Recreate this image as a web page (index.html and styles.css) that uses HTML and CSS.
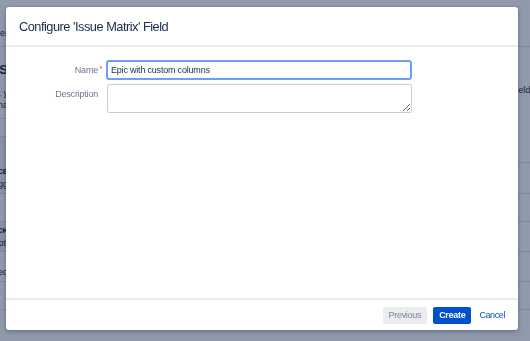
FILE: index.html
```html
<!DOCTYPE html>
<html lang="en">
<head>
  <meta charset="UTF-8" />
  <title>Configure 'Issue Matrix' Field</title>
  <link rel="stylesheet" href="styles.css">
</head>
<body>

  <!-- page behind the dialog -->
  <div class="page">
    <div class="page-head">
      <div class="side-left"><span class="frag">Field manager</span></div>
    </div>
    <div class="page-main">
      <div class="side-left">
        <div class="bg-row row-intro">
          <div class="frag frag-title">FIELDS</div>
          <div class="frag">Add a field; y</div>
          <div class="frag">Issue na</div>
        </div>
        <div class="bg-row row-empty"></div>
        <div class="bg-row row-item">
          <div class="frag frag-bold">PLACE</div>
          <div class="frag">Tagg</div>
        </div>
        <div class="bg-row row-gap"></div>
        <div class="bg-row row-item2">
          <div class="frag frag-bold">CHECK</div>
          <div class="frag">Opti</div>
        </div>
        <div class="bg-row row-last">
          <div class="frag">Created</div>
        </div>
        <div class="bg-row row-gap"></div>
      </div>

      <div class="side-right">
        <div class="bg-row row-right-top">
          <div class="frag-r">Field</div>
        </div>
        <div class="bg-row row-right-a"></div>
        <div class="bg-row row-gap"></div>
        <div class="bg-row row-right-b"></div>
        <div class="bg-row row-right-b"></div>
        <div class="bg-row row-gap"></div>
      </div>
    </div>
  </div>

  <div class="blanket"></div>

  <!-- the dialog -->
  <div class="dialog">
    <div class="dialog-header">
      <h2 class="dialog-title">Configure 'Issue Matrix' Field</h2>
    </div>

    <div class="dialog-body">
      <form class="form">
        <label class="form-label" for="fieldName">Name<span class="req">*</span></label>
        <input class="text-input" id="fieldName" type="text" value="Epic with custom columns" />

        <label class="form-label" for="fieldDesc">Description</label>
        <textarea class="text-area" id="fieldDesc"></textarea>
      </form>
    </div>

    <div class="dialog-footer">
      <button class="btn btn-prev">Previous</button>
      <button class="btn btn-create">Create</button>
      <a class="btn-link" href="#">Cancel</a>
    </div>
  </div>

</body>
</html>
```

FILE: styles.css
```css
* {
  box-sizing: border-box;
}

html,
body {
  margin: 0;
  padding: 0;
  height: 100%;
}

body {
  font-family: "Liberation Sans", Arial, sans-serif;
  background-color: #fff;
  color: #172b4d;
  overflow: hidden;
}

/* background page */

.page {
  height: 341px;
  display: flex;
  flex-direction: column;
  font-size: 9px;
}

.page-head {
  height: 47px;
  border-bottom: 1px solid #dfe1e6;
  display: flex;
  align-items: flex-end;
  padding-bottom: 7px;
}

.page-main {
  flex: 1;
  display: flex;
  justify-content: space-between;
}

.side-left {
  width: 8px;
  display: flex;
  flex-direction: column;
}

.page-head .side-left {
  align-items: flex-end;
}

.side-right {
  width: 22px;
  display: flex;
  flex-direction: column;
}

.frag {
  display: flex;
  justify-content: flex-end;
  white-space: nowrap;
  line-height: 12px;
}

.frag-title {
  font-size: 13px;
  font-weight: bold;
  line-height: 16px;
  margin-bottom: 9px;
}

.frag-bold {
  font-weight: bold;
  font-size: 8px;
  color: #091e42;
}

.frag-r {
  white-space: nowrap;
  padding-left: 3px;
  line-height: 12px;
}

.bg-row {
  border-bottom: 1px solid #dfe1e6;
}

.row-intro {
  height: 72px;
  padding-top: 15px;
}

.row-empty {
  height: 18px;
}

.row-item {
  height: 57px;
  padding-top: 29px;
  background-color: #f4f0f6;
}

.row-gap {
  height: 28px;
}

.row-item2 {
  height: 30px;
  padding-top: 3px;
  background-color: #f4f0f6;
}

.row-last {
  height: 30px;
  padding-top: 14px;
}

.row-right-top {
  height: 116px;
  padding-top: 37px;
}

.row-right-a {
  height: 31px;
}

.row-right-b {
  height: 30px;
}

.blanket {
  position: fixed;
  inset: 0;
  background-color: rgba(9, 30, 66, 0.45);
}

/* dialog */

.dialog {
  position: fixed;
  top: 7px;
  left: 6px;
  width: 512px;
  height: 323px;
  background-color: #fff;
  border-radius: 3px;
  box-shadow: 0 0 0 1px rgba(9, 30, 66, 0.06), 0 2px 5px rgba(9, 30, 66, 0.3);
  display: flex;
  flex-direction: column;
}

.dialog-header {
  height: 40px;
  padding: 0 13px;
  border-bottom: 2px solid #ebecf0;
  display: flex;
  align-items: center;
}

.dialog-title {
  margin: 0;
  font-size: 12.8px;
  font-weight: normal;
  letter-spacing: -0.5px;
  color: #172b4d;
}

.dialog-body {
  flex: 1;
  padding-top: 13px;
}

.form {
  display: grid;
  grid-template-columns: 100px 306px;
  row-gap: 4px;
  margin: 0;
}

.form-label {
  position: relative;
  font-size: 9px;
  letter-spacing: -0.2px;
  line-height: 11px;
  color: #6b778c;
  text-align: right;
  padding: 5px 8px 0 0;
}

.req {
  position: absolute;
  right: 4px;
  top: 3px;
  font-size: 7px;
  color: #de350b;
}

.text-input {
  width: 306px;
  height: 20px;
  margin: 0;
  padding: 0 3px;
  border: 2px solid #6c9ff8;
  border-radius: 3px;
  font-family: "Liberation Sans", Arial, sans-serif;
  font-size: 9px;
  letter-spacing: -0.2px;
  color: #172b4d;
  outline: none;
}

.text-area {
  width: 305px;
  height: 29px;
  margin: 0 0 0 1px;
  border: 1px solid #c9ced6;
  border-radius: 2px;
  font-family: "Liberation Sans", Arial, sans-serif;
  font-size: 9px;
  resize: vertical;
}

.dialog-footer {
  height: 32px;
  border-top: 2px solid #ebecf0;
  display: flex;
  justify-content: flex-end;
  align-items: center;
  gap: 6px;
  padding-right: 13px;
}

.btn {
  height: 17px;
  padding: 0 6px;
  border: none;
  border-radius: 2px;
  font-family: "Liberation Sans", Arial, sans-serif;
  font-size: 9px;
  letter-spacing: -0.3px;
  cursor: pointer;
}

.btn-prev {
  background-color: #ebecf0;
  color: #7a869a;
}

.btn-create {
  background-color: #0052cc;
  color: #fff;
  font-weight: bold;
}

.btn-link {
  margin-left: 2px;
  font-size: 9px;
  letter-spacing: -0.4px;
  color: #0052cc;
  text-decoration: none;
}
```
